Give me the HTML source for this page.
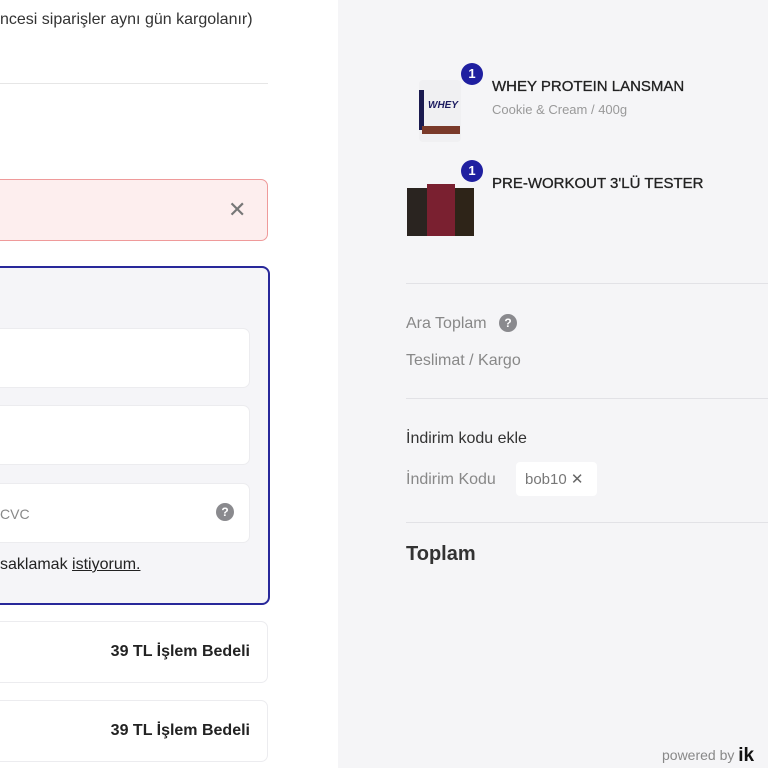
<!DOCTYPE html>
<html><head><meta charset="utf-8"><style>
*{margin:0;padding:0;box-sizing:border-box}
body{width:768px;height:768px;overflow:hidden;position:relative;background:#fff;font-family:"Liberation Sans",sans-serif;color:#222}
.a{position:absolute;white-space:nowrap}
.right{position:absolute;left:338px;top:0;width:430px;height:768px;background:#f5f5f7}
.box{position:absolute;border-radius:7px}
.q{position:absolute;width:18px;height:18px;border-radius:50%;background:#8a8a8e;color:#fff;font-size:12px;font-weight:bold;text-align:center;line-height:18px}
.badge{position:absolute;width:22px;height:22px;border-radius:50%;background:#1f1fa0;color:#fff;font-size:13px;font-weight:bold;text-align:center;line-height:22px}
.hr{position:absolute;left:406px;width:362px;height:1px;background:#e2e2e6}
</style></head><body>
<div class="a" style="left:0;top:11px;font-size:16px;color:#333">ncesi siparişler aynı gün kargolanır)</div>
<div class="a" style="left:0;top:83px;width:268px;height:1px;background:#e6e6e6"></div>
<div class="box" style="left:-10px;top:179px;width:278px;height:62px;background:#fdeeee;border:1px solid #ef9a9a"></div>
<div class="a" style="left:228px;top:197px;font-size:22px;color:#777">✕</div>
<div class="box" style="left:-10px;top:266px;width:280px;height:339px;background:#f5f5f8;border:2px solid #28289a;border-radius:8px"></div>
<div class="box" style="left:-10px;top:328px;width:260px;height:60px;background:#fff;border:1px solid #ececef"></div>
<div class="box" style="left:-10px;top:405px;width:260px;height:60px;background:#fff;border:1px solid #ececef"></div>
<div class="box" style="left:-10px;top:483px;width:260px;height:60px;background:#fff;border:1px solid #ececef"></div>
<div class="a" style="left:0;top:506px;font-size:14px;color:#888">CVC</div>
<div class="q" style="left:216px;top:503px">?</div>
<div class="a" style="left:0;top:556px;font-size:16px;color:#222">saklamak <span style="text-decoration:underline">istiyorum.</span></div>
<div class="box" style="left:-10px;top:621px;width:278px;height:62px;background:#fff;border:1px solid #ececef"></div>
<div class="a" style="right:518px;top:643px;font-size:16px;font-weight:bold;color:#222">39 TL İşlem Bedeli</div>
<div class="box" style="left:-10px;top:700px;width:278px;height:62px;background:#fff;border:1px solid #ececef"></div>
<div class="a" style="right:518px;top:722px;font-size:16px;font-weight:bold;color:#222">39 TL İşlem Bedeli</div>

<div class="right"></div>
<div class="a" style="left:419px;top:80px;width:42px;height:62px;background:#f0f0f2;border-radius:4px">
 <div style="position:absolute;left:0;top:10px;width:5px;height:40px;background:#1b1b50"></div>
 <div style="position:absolute;left:9px;top:20px;font-size:10px;font-weight:bold;font-style:italic;color:#1b1b60">WHEY</div>
 <div style="position:absolute;left:3px;top:46px;width:38px;height:8px;background:#7a3a2a"></div>
</div>
<div class="a" style="left:407px;top:188px;width:22px;height:48px;background:#2a2420"></div>
<div class="a" style="left:452px;top:188px;width:22px;height:48px;background:#2e2418"></div>
<div class="a" style="left:427px;top:184px;width:28px;height:52px;background:#7a2030"></div>
<div class="badge" style="left:461px;top:63px">1</div>
<div class="badge" style="left:461px;top:160px">1</div>
<div class="a" style="left:492px;top:78px;font-size:15px;color:#222;-webkit-text-stroke:0.3px #222">WHEY PROTEIN LANSMAN</div>
<div class="a" style="left:492px;top:102px;font-size:13px;color:#999">Cookie &amp; Cream / 400g</div>
<div class="a" style="left:492px;top:175px;font-size:15px;color:#222;-webkit-text-stroke:0.3px #222">PRE-WORKOUT 3'LÜ TESTER</div>
<div class="hr" style="top:283px"></div>
<div class="a" style="left:406px;top:315px;font-size:16px;color:#888">Ara Toplam</div>
<div class="q" style="left:499px;top:314px">?</div>
<div class="a" style="left:406px;top:352px;font-size:16px;color:#888">Teslimat / Kargo</div>
<div class="hr" style="top:398px"></div>
<div class="a" style="left:406px;top:430px;font-size:16px;color:#333">İndirim kodu ekle</div>
<div class="a" style="left:406px;top:471px;font-size:16px;color:#888">İndirim Kodu</div>
<div class="box" style="left:516px;top:462px;width:81px;height:34px;background:#fff;border-radius:4px"></div>
<div class="a" style="left:525px;top:470px;font-size:15px;color:#777">bob10 <span style="color:#666">✕</span></div>
<div class="hr" style="top:522px"></div>
<div class="a" style="left:406px;top:543px;font-size:20px;font-weight:bold;color:#333">Toplam</div>
<div class="a" style="left:662px;top:744px;font-size:14px;color:#888">powered by <span style="font-size:19px;font-weight:bold;color:#111;position:relative;top:1px">ik</span></div>
</body></html>
